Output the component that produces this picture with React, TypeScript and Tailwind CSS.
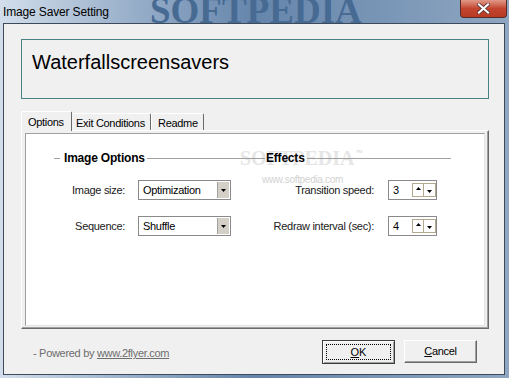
import React from "react";

const ui = { fontFamily: '"Liberation Sans", Arial, sans-serif' };

const Tri = ({ up }: { up?: boolean }) => (
  <svg width="5" height="3" viewBox="0 0 5 3" className="block">
    {up ? <path d="M2.5 0 L5 3 L0 3 Z" fill="#000" /> : <path d="M0 0 L5 0 L2.5 3 Z" fill="#000" />}
  </svg>
);

const Combo: React.FC<{ value: string }> = ({ value }) => (
  <div className="w-[93px] h-[20px] bg-white border border-[#8a8a8a] flex items-stretch">
    <div className="flex-1 pl-[4px] flex items-center text-[11px] tracking-[-0.3px] text-black">{value}</div>
    <div className="w-[12px] my-px mr-px bg-[#d4d0c8] border-l border-[#a0a0a0] flex items-center justify-center">
      <Tri />
    </div>
  </div>
);

const Spin: React.FC<{ value: string }> = ({ value }) => (
  <div className="w-[49px] h-[20px] bg-white border border-[#8a8a8a] flex items-center">
    <div className="w-[24px] pl-[4px] text-[11px] text-black">{value}</div>
    <div className="flex h-[14px] border border-[#b4a98f]">
      <div className="w-[11px] flex items-start justify-center pt-[3px] border-r border-[#b4a98f]">
        <Tri up />
      </div>
      <div className="w-[11px] flex items-end justify-center pb-[3px]">
        <Tri />
      </div>
    </div>
  </div>
);

const Row: React.FC<{ label: string; combo: string; label2: string; spin: string }> = ({
  label,
  combo,
  label2,
  spin,
}) => (
  <div className="flex items-center h-[20px] text-[11px] tracking-[-0.3px] text-[#202020]">
    <div className="w-[99px] text-right">{label}</div>
    <div className="ml-[13px]">
      <Combo value={combo} />
    </div>
    <div className="w-[143px] text-right">{label2}</div>
    <div className="ml-[14px]">
      <Spin value={spin} />
    </div>
  </div>
);

export default function App() {
  return (
    <div
      className="w-[509px] h-[378px] overflow-hidden flex flex-col bg-gradient-to-r from-[#d2deeb] via-[#6585ab] to-[#8ea6c1]"
      style={ui}
    >
      {/* title bar */}
      <div className="relative h-[23px] flex items-start overflow-hidden">
        <div
          className="absolute left-[150px] top-[-8px] text-[37px] leading-none font-bold text-[#476a93]"
          style={{ fontFamily: '"Liberation Serif", serif' }}
        >
          SOFTPEDIA
        </div>
        <div className="relative pl-[3px] pt-[3px] text-[12px] tracking-[-0.15px] text-black">
          Image Saver Setting
        </div>
        <div className="relative ml-auto mr-[2px] w-[47px] h-[18px] rounded-b-[4px] border border-t-0 border-[#5a2a26] bg-gradient-to-b from-[#e09888] via-[#c4452f] to-[#b83a22] flex items-center justify-center">
          <svg width="13" height="11" viewBox="0 0 13 11">
            <path d="M2 1.5 L11 9.5 M11 1.5 L2 9.5" stroke="#4a2a2a" strokeWidth="3.6" strokeLinecap="square" />
            <path d="M2 1.5 L11 9.5 M11 1.5 L2 9.5" stroke="#ffffff" strokeWidth="2.2" strokeLinecap="square" />
          </svg>
        </div>
      </div>

      {/* client area */}
      <div className="ml-[3px] w-[502px] h-[352px] border border-[#3c4a5c] bg-[#f0f0f0] flex flex-col">
        <div className="ml-[17px] mt-[15px] w-[468px] h-[60px] border border-[#4a8282] pl-[10px] pt-[10px]">
          <div className="text-[20px] leading-[24px] text-black">Waterfallscreensavers</div>
        </div>

        {/* tabs */}
        <div className="ml-[17px] mt-[12px] h-[19px] flex items-end text-[11px] tracking-[-0.3px] text-black">
          <div className="relative z-10 -mb-px w-[51px] h-[20px] bg-[#f0f0f0] border-l border-t border-white border-r border-r-[#696969] rounded-t-[2px] pl-[6px] pt-[2px]">
            Options
          </div>
          <div className="w-[79px] h-[17px] border-t border-white border-r border-r-[#696969] rounded-t-[2px] pl-[4px] pt-[1px]">
            Exit Conditions
          </div>
          <div className="w-[53px] h-[17px] border-t border-l border-white border-r border-r-[#696969] rounded-t-[2px] pl-[6px] pt-[1px]">
            Readme
          </div>
        </div>

        {/* tab page */}
        <div className="ml-[17px] w-[468px] h-[199px] border border-white border-r-[#696969] border-b-[#696969] shadow-[inset_-1px_-1px_0_#a0a0a0] px-[3px] pt-[2px] pb-[2px]">
          <div className="relative h-full bg-white border border-[#a0a0a0] border-r-[#e3e3e3] border-b-[#e3e3e3]">
            {/* watermark */}
            <div className="absolute left-[214px] top-[14px] pointer-events-none flex items-start">
              <span
                className="text-[20px] leading-none font-bold text-[#e6e6e6]"
                style={{ fontFamily: '"Liberation Serif", serif' }}
              >
                SOFTPEDIA
              </span>
              <span className="text-[7px] text-[#d4d4d4] ml-[1px]">™</span>
            </div>
            <div className="absolute left-[236px] top-[41px] text-[10px] tracking-[-0.3px] leading-none text-[#d2d2d2] pointer-events-none">
              www.softpedia.com
            </div>

            {/* group headers */}
            <div className="relative ml-[28px] mt-[17px] h-[14px] flex items-center">
              <div className="w-[208px] flex items-center">
                <div className="w-[6px] h-px bg-[#a0a0a0]" />
                <div className="ml-[4px] text-[12px] font-bold tracking-[-0.2px] text-black">Image Options</div>
                <div className="ml-[2px] flex-1 h-px bg-[#a0a0a0]" />
              </div>
              <div className="w-[189px] flex items-center">
                <div className="w-[3px] h-px bg-[#a0a0a0]" />
                <div className="ml-[1px] text-[12px] font-bold tracking-[-0.2px] text-black">Effects</div>
                <div className="ml-[2px] flex-1 h-px bg-[#a0a0a0]" />
              </div>
            </div>

            <div className="relative mt-[15px] flex flex-col gap-[16px]">
              <Row label="Image size:" combo="Optimization" label2="Transition speed:" spin="3" />
              <Row label="Sequence:" combo="Shuffle" label2="Redraw interval (sec):" spin="4" />
            </div>
          </div>
        </div>

        {/* footer */}
        <div className="mt-[11px] pl-[29px] pr-[27px] flex items-center">
          <div className="mt-[3px] text-[11px] tracking-[-0.3px] text-[#6d6d6d]">
            - Powered by <span className="underline">www.2flyer.com</span>
          </div>
          <div className="ml-auto flex gap-[9px] items-start">
            <div className="w-[73px] h-[24px] border border-[#3c3c3c] bg-[#f0f0f0] shadow-[inset_1px_1px_0_#ffffff,inset_-1px_-1px_0_#a0a0a0] p-[3px]">
              <div className="h-full border border-dotted border-black flex items-center justify-center text-[11px] text-black">
                <span><u>O</u>K</span>
              </div>
            </div>
            <div className="w-[73px] h-[23px] border border-white border-r-[#696969] border-b-[#696969] bg-[#f0f0f0] shadow-[inset_-1px_-1px_0_#a0a0a0] flex items-center justify-center text-[11px] tracking-[-0.3px] text-black">
              <span><u>C</u>ancel</span>
            </div>
          </div>
        </div>
      </div>
    </div>
  );
}
